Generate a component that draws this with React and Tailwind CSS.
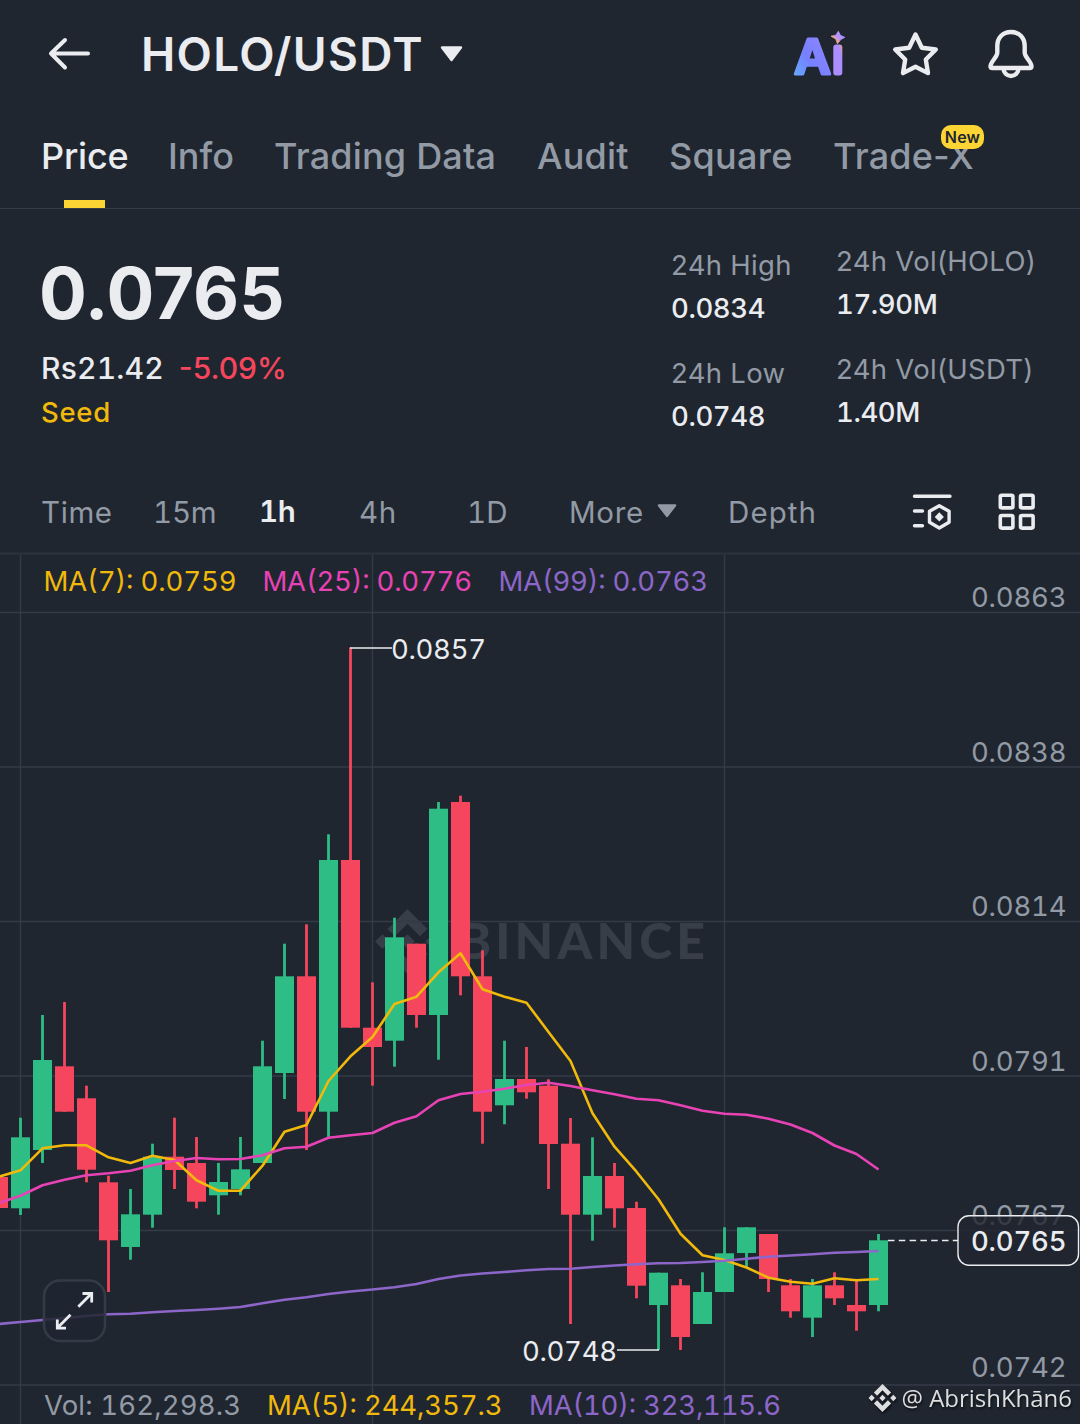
import clsx from "clsx";
import { SiBinance } from "react-icons/si";

const GREEN = "#2ebd85";
const RED = "#f6465d";
const YELLOW = "#f0b90b";
const PINK = "#e843b5";
const PURPLE = "#8d66c9";
const GRAY = "#929aa5";
const WHITE = "#eaecef";
const LINE = "#333b47";

const tabs = [
  {
    name: "Price",
    style: "w-[86px] text-[#eaecef] tracking-[-0.2px]",
    active: true,
  },
  { name: "Info", style: "w-[65px]" },
  { name: "Trading Data", style: "w-[222px] tracking-[0.2px]" },
  { name: "Audit", style: "w-[91px] tracking-[0.2px]" },
  { name: "Square", style: "w-[123px] tracking-[0.3px]" },
  { name: "Trade-X", style: "w-[140px] tracking-[0.2px]", isNew: true },
];

const intervals = [
  { name: "Time", style: "w-[112px] tracking-[0.6px]" },
  { name: "15m", style: "w-[106px] tracking-[-0.2px]" },
  {
    name: "1h",
    style: "w-[100px] font-semibold tracking-[-0.3px] text-[#eaecef] pb-0.5",
  },
  { name: "4h", style: "w-[108px] tracking-[0.6px]" },
  { name: "1D", style: "w-[102px]" },
];

// wick top, body top, body bottom, wick bottom, color
const candles = [
  [1177, 1177, 1208, 1208, RED],
  [1117.7, 1137.3, 1208.3, 1215, GREEN],
  [1015, 1060, 1150, 1163, GREEN],
  [1002, 1066.3, 1111.7, 1111.7, RED],
  [1085.7, 1098.3, 1169.7, 1182.3, RED],
  [1175.7, 1182.3, 1240.3, 1292, RED],
  [1189, 1214.3, 1247, 1259.7, GREEN],
  [1143.7, 1156.7, 1214.7, 1227.7, GREEN],
  [1117.7, 1156.7, 1170, 1189, RED],
  [1137, 1163, 1201.7, 1208.3, RED],
  [1163, 1182, 1195.3, 1214.7, GREEN],
  [1137, 1169.3, 1189, 1195.3, GREEN],
  [1040.7, 1066.3, 1163, 1163, GREEN],
  [943.7, 976.3, 1073, 1099, GREEN],
  [924.3, 976.3, 1111.7, 1150, RED],
  [834.3, 860, 1111.7, 1137.3, GREEN],
  [647.5, 860, 1027.7, 1027.7, RED],
  [982.3, 1027.7, 1047, 1085.7, RED],
  [917.7, 937.3, 1040.7, 1066.7, GREEN],
  [943.7, 943.7, 1015, 1027.7, RED],
  [802, 808.7, 1015, 1059.7, GREEN],
  [795.7, 802, 976.3, 995.3, RED],
  [950.3, 976.3, 1111.7, 1143.7, RED],
  [1040.7, 1079, 1105.3, 1124.3, GREEN],
  [1047, 1079, 1092.3, 1098.7, RED],
  [1079.3, 1085.7, 1144, 1189, RED],
  [1118, 1143.7, 1214.7, 1324, RED],
  [1137.3, 1176, 1214.7, 1240.7, GREEN],
  [1163, 1176, 1208.3, 1227.7, RED],
  [1201.7, 1208, 1285.7, 1298.3, RED],
  [1272.7, 1272.7, 1305, 1350, GREEN],
  [1279, 1285.3, 1337, 1350, RED],
  [1272.3, 1292, 1324, 1324, GREEN],
  [1227.3, 1253.3, 1292, 1292, GREEN],
  [1227.3, 1227.3, 1253, 1266.7, GREEN],
  [1234, 1234, 1279, 1292, RED],
  [1279, 1285.3, 1311.3, 1317.7, RED],
  [1279, 1285.3, 1317.7, 1337, GREEN],
  [1272.3, 1285.3, 1298.3, 1305, RED],
  [1280, 1305, 1311.3, 1330.7, RED],
  [1234, 1240.3, 1305, 1311.3, GREEN],
];

const ma7 = [
  1176.8, 1170.3, 1148.3, 1145.3, 1145.3, 1157.3, 1163, 1155.7, 1160, 1180.3,
  1190.7, 1190.7, 1165.7, 1131.7, 1125, 1081, 1056.3, 1037, 1004, 996.7, 972.3,
  953.3, 989.3, 996.7, 1002.7, 1032, 1061, 1113.3, 1146.7, 1171.7, 1199.3,
  1233.7, 1255.3, 1260, 1267.5, 1277.7, 1281.7, 1283.7, 1278.3, 1280.3, 1279,
];

const ma25 = [
  1203.2, 1195.7, 1185.3, 1179.7, 1175.3, 1173.3, 1170.7, 1165.3, 1161, 1158,
  1159.3, 1159, 1155.3, 1148.3, 1146.7, 1137.7, 1135.3, 1133, 1122.7, 1116.3,
  1100.3, 1094, 1091.7, 1088.7, 1085, 1082.7, 1086, 1090.3, 1094.3, 1098.7,
  1100.3, 1105.3, 1110.7, 1113.7, 1114.7, 1118.7, 1124.5, 1133, 1145.5, 1154,
  1169.5,
];

const ma99 = [
  1324, 1322, 1320, 1318, 1316, 1314.3, 1313.7, 1312.3, 1311, 1310, 1308.7,
  1307, 1303.3, 1299.7, 1297.2, 1294, 1291.5, 1289.5, 1287.3, 1284, 1279,
  1275.5, 1273.5, 1272, 1270.3, 1269, 1268.7, 1267, 1265.5, 1264.3, 1263.3,
  1263, 1262, 1260.7, 1258.7, 1256.7, 1255.5, 1254.3, 1252.7, 1252, 1251,
];

const candleX = (index) => 22 * index - 1.5;
const toPoints = (values) =>
  values.map((value, index) => `${candleX(index)},${value}`).join(" ");

const Caret = ({ className }) => (
  <svg viewBox="0 0 23 16" className={className}>
    <path
      d="M2 1.5h19l-9.5 12.5z"
      fill="currentColor"
      stroke="currentColor"
      strokeWidth="2.4"
      strokeLinejoin="round"
    />
  </svg>
);

const AiLogo = () => (
  <svg viewBox="0 0 56 48" className="w-14 h-12 overflow-visible">
    <defs>
      <linearGradient id="ai" x1="0" y1="1" x2="0.7" y2="0.2">
        <stop offset="0" stopColor="#5cb2ff" />
        <stop offset="0.2" stopColor="#66a3ff" />
        <stop offset="0.55" stopColor="#7680ff" />
        <stop offset="1" stopColor="#8a84ff" />
      </linearGradient>
      <linearGradient id="spark" x1="0" y1="1" x2="1" y2="0">
        <stop offset="0.35" stopColor="#e9a58f" />
        <stop offset="0.5" stopColor="#b393ff" />
      </linearGradient>
      <linearGradient id="stem" x1="0" y1="1" x2="1" y2="0">
        <stop offset="0.75" stopColor="#ab8dff" />
        <stop offset="1" stopColor="#e9a58f" />
      </linearGradient>
    </defs>
    <text
      x="3.2"
      y="44"
      fontSize="48"
      fontWeight="600"
      textLength="36.500"
      lengthAdjust="spacingAndGlyphs"
      fill="url(#ai)"
      stroke="url(#ai)"
      strokeWidth="3.2"
      strokeLinejoin="round"
    >
      A
    </text>
    <rect x="42.3" y="14.5" width="9" height="31" rx="3" fill="url(#stem)" />
    <path
      d="M47.3 1.200l2.300 4.300 4.200 1.800-4 2.300-3.400 4.200-1.600-4.800L40 6.200l4.800-1z"
      fill="url(#spark)"
      stroke="url(#spark)"
      strokeWidth="0.8"
    />
  </svg>
);

const Header = () => (
  <header className="h-[108px] flex items-center pl-12 pr-[45px] text-[#eaecef]">
    <svg
      viewBox="0 0 44 36"
      className="w-11 h-9"
      fill="none"
      stroke="currentColor"
      strokeWidth="4"
      strokeLinecap="round"
      strokeLinejoin="round"
    >
      <path d="M17 4L3 17.5l14 14M3 17.5h37" />
    </svg>
    <h1 className="ml-[49px] w-[299px] text-[46px] leading-none font-semibold tracking-[1.3px] whitespace-nowrap">
      HOLO/USDT
    </h1>
    <Caret className="w-[23px] h-4" />
    <div className="ml-auto flex items-center">
      <AiLogo />
      <svg
        viewBox="0 0 48 48"
        className="ml-11 w-12 h-12"
        fill="none"
        stroke="currentColor"
        strokeWidth="4.4"
        strokeLinejoin="round"
      >
        <path d="M24.500 4.500l6.300 13.200 14 1.800-10 10 2.200 13.600L24.500 36.800l-12.500 6.300 2.200-13.600-10-10 14-1.800z" />
      </svg>
      <svg
        viewBox="0 0 48 50"
        className="ml-12 w-12 h-[50px]"
        fill="none"
        stroke="currentColor"
        strokeWidth="4.4"
        strokeLinejoin="round"
      >
        <path d="M24 3C15.500 3 10.300 9 10.300 17v6.500c0 5-6.800 9-6.800 14q0 1.500 1.800 1.500h37.400q1.800 0 1.800-1.500c0-5-6.800-9-6.800-14V17C37.700 9 32.500 3 24 3zM16.500 39.500a7.500 7.500 0 0 0 15 0" />
      </svg>
    </div>
  </header>
);

const Tabs = () => (
  <nav className="h-[101px] flex gap-[41px] pl-[41px] border-b border-[#333b47] text-[36px] leading-[97px] font-medium text-[#929aa5]">
    {tabs.map((tab) => (
      <div
        key={tab.name}
        className={clsx("relative whitespace-nowrap", tab.style)}
      >
        {tab.name}
        {tab.active && (
          <div className="absolute bottom-0 left-[23px] w-[41px] h-[8.500px] bg-[#fcd535]" />
        )}
        {tab.isNew && (
          <span className="absolute top-[17px] left-[108px] w-[43px] h-6 rounded-[10px] bg-[#fcd535] text-center text-[16px] leading-6 font-semibold text-[#202630]">
            New
          </span>
        )}
      </div>
    ))}
  </nav>
);

const Stat = ({ label, value }) => (
  <div className="text-[27.500px] leading-[43px] whitespace-nowrap">
    <p className="text-[#929aa5] tracking-[0.3px]">{label}</p>
    <p className="text-[#eaecef] font-medium tracking-[-0.4px] tabular-nums">
      {value}
    </p>
  </div>
);

const Summary = () => (
  <section className="h-[263px] flex pl-[41px] text-[#eaecef]">
    <div className="w-[630px] pt-11">
      <p className="-ml-0.5 text-[71px] leading-[80px] font-bold">0.0765</p>
      <p className="mt-[13px] flex gap-[15px] text-[30px] leading-[44px] font-medium">
        <span className="tracking-[0.2px] tabular-nums">Rs21.42</span>
        <span className="text-[#f6465d]">-5.09%</span>
      </p>
      <p className="text-[27.500px] leading-[44px] font-medium tracking-[0.7px] text-[#f0b90b]">
        Seed
      </p>
    </div>
    <div className="w-[165px] pt-[35px] flex flex-col gap-[22px]">
      <Stat label="24h High" value="0.0834" />
      <Stat label="24h Low" value="0.0748" />
    </div>
    <div className="pt-[31px] flex flex-col gap-[22px]">
      <Stat label="24h Vol(HOLO)" value="17.90M" />
      <Stat label="24h Vol(USDT)" value="1.40M" />
    </div>
  </section>
);

const IntervalBar = () => (
  <div className="h-20 flex items-center pl-[41px] pt-0.5 text-[29.500px] leading-none tabular-nums text-[#929aa5]">
    {intervals.map((interval) => (
      <span key={interval.name} className={interval.style}>
        {interval.name}
      </span>
    ))}
    <span className="w-[88px] tracking-[0.7px]">More</span>
    <Caret className="w-5 h-3.5 mb-1" />
    <span className="ml-[51px] w-[184px] tracking-[1.1px]">Depth</span>
    <svg
      viewBox="0 0 40 40"
      className="mb-0.5 w-10 h-10 text-[#eaecef]"
      fill="none"
      stroke="currentColor"
      strokeWidth="3.400"
      strokeLinecap="round"
      strokeLinejoin="round"
    >
      <path d="M2.500 4.300h35.500M2.500 19h8M2.500 33.700h8" />
      <path d="M27.300 13.800l9.800 5.500v11l-9.800 5.700-9.800-5.700v-11z" />
      <path
        d="M27.300 20.300l4.600 4.600-4.600 4.600-4.600-4.600z"
        fill="currentColor"
        stroke="none"
      />
    </svg>
    <svg
      viewBox="0 0 38 38"
      className="mb-[3px] ml-[46px] w-[38px] h-[38px] text-[#eaecef]"
      fill="none"
      stroke="currentColor"
      strokeWidth="3.600"
    >
      <rect x="2.300" y="2.300" width="12.600" height="12.600" rx="1.500" />
      <rect x="22.500" y="2.300" width="12.600" height="12.600" rx="1.500" />
      <rect x="2.300" y="22.500" width="12.600" height="12.600" rx="1.500" />
      <rect x="22.500" y="22.500" width="12.600" height="12.600" rx="1.500" />
    </svg>
  </div>
);

const Label = ({ x, y, width, color, children, ...rest }) => (
  <text
    x={x}
    y={y}
    textLength={width}
    fill={color}
    fontSize="27.5"
    className="tabular-nums"
    {...rest}
  >
    {children}
  </text>
);

const priceTicks = [
  ["0.0863", 607],
  ["0.0838", 762],
  ["0.0814", 916],
  ["0.0791", 1071],
  ["0.0767", 1225],
  ["0.0742", 1377],
];

const Chart = () => (
  <svg viewBox="0 552 1080 872" className="block w-[1080px] h-[872px]">
    <rect x="0" y="552.300" width="1080" height="2.500" fill="#2b313c" />

    {/* Watermark */}
    <g fill="#383e47">
      <SiBinance x="375" y="909" size={65} fill="#383e47" />
      <text
        x="458"
        y="959"
        fontSize="50"
        fontWeight="900"
        textLength="247"
        className="font-['Lato',sans-serif]"
      >
        BINANCE
      </text>
    </g>

    {/* Grid */}
    <g stroke={LINE} strokeWidth="1.400">
      {[612.5, 767, 921.5, 1076, 1230.5, 1385].map((y) => (
        <line key={y} x1="0" x2="1080" y1={y} y2={y} />
      ))}
      {[20.5, 372.5, 724.5].map((x) => (
        <line key={x} x1={x} x2={x} y1="555" y2="1424" />
      ))}
    </g>

    {/* Candles */}
    {candles.map(([high, top, bottom, low, color], index) => (
      <g key={index} fill={color}>
        <rect
          x={candleX(index) - 1.4}
          y={high}
          width="2.800"
          height={low - high}
        />
        <rect
          x={candleX(index) - 9.5}
          y={top}
          width="19"
          height={bottom - top}
        />
      </g>
    ))}

    {/* Moving averages */}
    <g fill="none" strokeWidth="2.600" strokeLinejoin="round">
      <polyline points={toPoints(ma7)} stroke={YELLOW} />
      <polyline points={toPoints(ma25)} stroke={PINK} />
      <polyline points={toPoints(ma99)} stroke={PURPLE} />
    </g>

    {/* High / low marks */}
    <g stroke={WHITE} strokeWidth="1.500">
      <line x1="350" x2="392" y1="648" y2="648" />
      <line x1="617" x2="659" y1="1350" y2="1350" />
    </g>
    <Label x="391" y="659" width="95" color={WHITE}>
      0.0857
    </Label>
    <Label x="522" y="1361" width="95" color={WHITE}>
      0.0748
    </Label>

    <Label x="43.5" y="591" width="193" color={YELLOW}>
      MA(7): 0.0759
    </Label>
    <Label x="262.5" y="591" width="209.5" color={PINK}>
      MA(25): 0.0776
    </Label>
    <Label x="498.5" y="591" width="209.5" color={PURPLE}>
      MA(99): 0.0763
    </Label>

    <Label x="44" y="1415" width="197" color={GRAY}>
      Vol: 162,298.3
    </Label>
    <Label x="267" y="1415" width="235.500" color={YELLOW}>
      MA(5): 244,357.3
    </Label>
    <Label x="529" y="1415" width="252" color={PURPLE}>
      MA(10): 323,115.6
    </Label>

    {priceTicks.map(([price, y]) => (
      <Label key={price} x="971" y={y} width="95.500" color={GRAY}>
        {price}
      </Label>
    ))}

    {/* Last price */}
    <line
      x1="888"
      x2="958"
      y1="1240.500"
      y2="1240.500"
      stroke={WHITE}
      strokeWidth="1.300"
      strokeDasharray="6.500 4.300"
    />
    <rect
      x="958"
      y="1215.700"
      width="120.500"
      height="49.600"
      rx="11"
      fill="#202630"
      fillOpacity="0.8"
      stroke={WHITE}
      strokeWidth="1.400"
    />
    <Label x="971" y="1251" width="95.500" color={WHITE} fontWeight="500">
      0.0765
    </Label>

    {/* Expand button */}
    <rect
      x="44"
      y="1280.500"
      width="61"
      height="60.500"
      rx="16"
      fill="#202630"
      fillOpacity="0.85"
      stroke={LINE}
      strokeWidth="2.500"
    />
    <path
      d="M78.300 1306.700l13.200-13.200M82.500 1293.500h9.200v9M70.500 1314.800l-13.200 13.200M57.300 1319.500v8.700h8.700"
      fill="none"
      stroke={WHITE}
      strokeWidth="2.800"
    />

    {/* Author */}
    <g className="drop-shadow-[1px_2px_1px_rgba(0,0,0,0.6)]">
      <SiBinance x="868.500" y="1384" size={28} fill="#dddee0" />
      <text
        x="901.5"
        y="1406.500"
        fontSize="24"
        textLength="170.500"
        fill="#dddee0"
        className="font-['Open_Sans',sans-serif]"
      >
        @ AbrishKhān6
      </text>
    </g>
  </svg>
);

export default function App() {
  return (
    <main className="w-[1080px] h-[1424px] overflow-hidden bg-[#202630] font-['Inter',sans-serif]">
      <Header />
      <Tabs />
      <Summary />
      <IntervalBar />
      <Chart />
    </main>
  );
}
